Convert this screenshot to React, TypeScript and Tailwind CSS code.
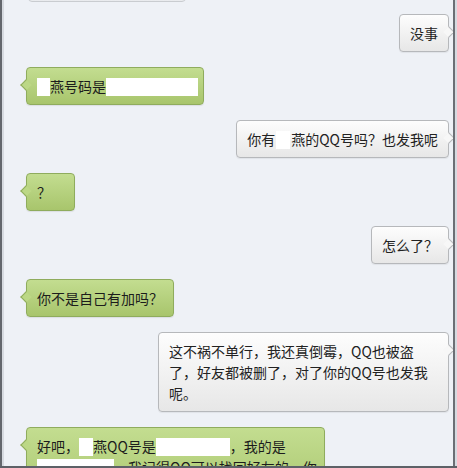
import React from "react";

function Box({ w, className = "" }: { w: number; className?: string }) {
  return (
    <span
      className={`inline-block h-[18px] bg-white align-[-4px] ${className}`}
      style={{ width: w }}
    />
  );
}

function Green({ children, className = "" }: { children: React.ReactNode; className?: string }) {
  return (
    <div
      className={`relative self-start min-w-[49px] rounded-[4px] border border-[#8fac5d] bg-gradient-to-b from-[#c3dd90] to-[#a8c56c] px-[10px] py-[7.5px] text-[14px] leading-[21px] text-[#1c1c1c] shadow-[0_1px_1px_rgba(0,0,0,0.08)] ${className}`}
    >
      <span className="absolute -left-[5px] top-[13px] h-[8px] w-[8px] rotate-45 border-b border-l border-[#8fac5d] bg-[#bcd886]" />
      <div className="relative">{children}</div>
    </div>
  );
}

function Gray({ children, className = "" }: { children: React.ReactNode; className?: string }) {
  return (
    <div
      className={`relative self-end min-w-[49px] rounded-[4px] border border-[#b6b8bb] bg-gradient-to-b from-[#fdfdfd] to-[#e7e7e7] px-[10px] py-[7.5px] text-[14px] leading-[21px] text-[#222222] shadow-[0_1px_1px_rgba(0,0,0,0.06)] ${className}`}
    >
      <span className="absolute -right-[5px] top-[13px] h-[8px] w-[8px] rotate-45 border-r border-t border-[#b6b8bb] bg-[#f7f7f7]" />
      <div className="relative">{children}</div>
    </div>
  );
}

export default function App() {
  return (
    <div className="flex h-[468px] w-[457px] flex-col overflow-hidden bg-[#eef1f6] font-['Noto_Sans_CJK_SC','Microsoft_YaHei',sans-serif]">
      <div className="flex min-h-0 flex-1">
        <div className="w-[2px] bg-[#63676d]" />
        <div className="w-[2px] bg-[#d6dae0]" />
        <div className="flex min-w-0 flex-1 flex-col gap-[15px] overflow-hidden pl-[22px] pr-[4px]">
          <div className="-mt-[36px] ml-[2px] h-[38px] w-[158px] shrink-0 rounded-[4px] border border-[#c9ccd0] bg-gradient-to-b from-[#fbfbfb] to-[#e9ebee]" />
          <Gray className="-mt-[3px]">没事</Gray>
          <Green>
            <span className="whitespace-nowrap">
              <Box w={13} />燕号码是<Box w={92} className="-mr-[5px]" />
            </span>
          </Green>
          <Gray>
            <span className="whitespace-nowrap">
              你有<Box w={14} className="mx-[1px]" />燕的QQ号吗？也发我呢
            </span>
          </Gray>
          <Green>？</Green>
          <Gray>怎么了？</Gray>
          <Green>你不是自己有加吗？</Green>
          <Gray className="w-[291px]">
            <div className="whitespace-nowrap">这不祸不单行，我还真倒霉，QQ也被盗</div>
            <div className="whitespace-nowrap">了，好友都被删了，对了你的QQ号也发我</div>
            <div className="whitespace-nowrap">呢。</div>
          </Gray>
          <Green className="w-[299px] shrink-0">
            <div className="whitespace-nowrap">
              好吧，<Box w={14} />燕QQ号是<Box w={74} />，我的是
            </div>
            <div className="whitespace-nowrap">
              <Box w={77} />，我记得QQ可以找回好友的，你
            </div>
            <div className="whitespace-nowrap">也可以试试找回来。</div>
          </Green>
        </div>
        <div className="w-[2px] bg-[#6b6f75]" />
        <div className="w-[2px] bg-[#d6dae0]" />
      </div>
      <div className="h-[2px] shrink-0 bg-[#5d6167]" />
    </div>
  );
}
